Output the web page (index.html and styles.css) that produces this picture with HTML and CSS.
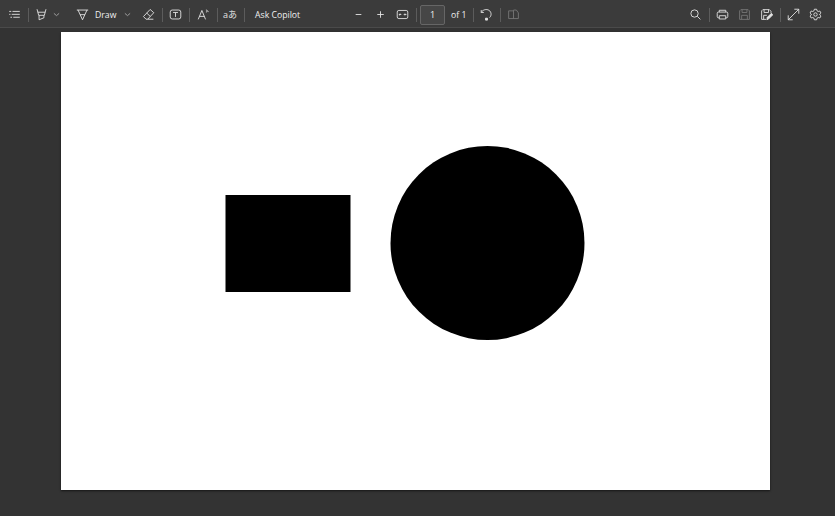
FILE: index.html
```html
<!DOCTYPE html>
<html lang="en">
<head>
    <meta charset="UTF-8">
    <title>PDF viewer</title>
    <link rel="stylesheet" href="styles.css">
</head>
<body>

<div class="toolbar">
    <button class="tool" aria-label="Contents">
        <svg viewBox="0 0 16 16"><path d="M1.500 4.200h2.500M5.500 4.200h9M1.500 7.800h1.500M4.500 7.800h10M3 11.400h2M6.500 11.400h8"/></svg>
    </button>
    <span class="sep"></span>
    <button class="tool" aria-label="Highlight">
        <svg viewBox="0 0 16 16"><path d="M2.500 1.500L4.500 9h7l2-7.500M3.500 5.200h9M5 9v5.500l6-2.500V9"/></svg>
    </button>
    <button class="chev" aria-label="Highlight options">
        <svg viewBox="0 0 8 8"><path d="M1 2.700l3 2.600 3-2.600"/></svg>
    </button>
    <button class="tool tool-draw" aria-label="Draw">
        <svg viewBox="0 0 16 16"><path d="M1 2.500h14M2.500 2.500l5.500 12 5.500-12M5 8.200h6"/></svg>
    </button>
    <span class="label label-draw">Draw</span>
    <button class="chev chev-draw" aria-label="Draw options">
        <svg viewBox="0 0 8 8"><path d="M1 2.700l3 2.600 3-2.600"/></svg>
    </button>
    <button class="tool tool-erase" aria-label="Erase">
        <svg viewBox="0 0 16 16"><path d="M10 1.800l4.500 4-7.500 8H5l-3.200-3.300zM5.800 6.200l4.400 4.200M7 13.800h7"/></svg>
    </button>
    <span class="sep"></span>
    <button class="tool" aria-label="Add text">
        <svg viewBox="0 0 16 16"><rect x="1.500" y="2.500" width="13" height="11" rx="2.500"/><path d="M5 5.500h6M8 5.500v5.500"/></svg>
    </button>
    <span class="sep"></span>
    <button class="tool tool-read" aria-label="Read aloud">
        <svg viewBox="0 0 16 16"><path d="M1.500 14L6 3l4.500 11M3 10.300h6M11 2.500c1.500.2 2.500 1 2.800 2.500M11 5l1.500-.5"/></svg>
    </button>
    <span class="sep"></span>
    <span class="tool translate" aria-label="Translate">aあ</span>
    <span class="sep"></span>
    <span class="label label-copilot">Ask Copilot</span>

    <button class="tool tool-zoom" aria-label="Zoom out">
        <svg viewBox="0 0 16 16"><path d="M4.500 8h7"/></svg>
    </button>
    <button class="tool" aria-label="Zoom in">
        <svg viewBox="0 0 16 16"><path d="M4 8h8M8 4v8"/></svg>
    </button>
    <button class="tool" aria-label="Fit to width">
        <svg viewBox="0 0 16 16"><rect x="1.500" y="3" width="13" height="10" rx="2"/><path d="M3.800 8h2.700M5 6.800L3.800 8 5 9.200M12.200 8H9.500M11 6.800L12.200 8 11 9.200"/></svg>
    </button>
    <span class="sep"></span>
    <input class="page-input" type="text" value="1" aria-label="Page number">
    <span class="label label-of">of 1</span>
    <span class="sep sep-of"></span>
    <button class="tool" aria-label="Rotate">
        <svg viewBox="0 0 16 16"><path d="M1.500 5.500C3.500 2 8 1 11 2.800c3.200 2 3.500 6.500.8 9M1.500 2.500v3h3.200"/><path class="fill" d="M6.800 12.500h2.400v2.400H6.800z"/></svg>
    </button>
    <span class="sep"></span>
    <button class="tool tool-off" aria-label="Page view">
        <svg viewBox="0 0 16 16"><path d="M8 3.500H2v9.500h12V6l-2.500-3.500H8zM8 3.500V13"/></svg>
    </button>

    <button class="tool tool-search" aria-label="Find">
        <svg viewBox="0 0 16 16"><circle cx="6.800" cy="6.800" r="4.500"/><path d="M10.200 10.200L14 14"/></svg>
    </button>
    <span class="sep"></span>
    <button class="tool" aria-label="Print">
        <svg viewBox="0 0 16 16"><path d="M4 5V2.800h8V5M4 12H3a1.500 1.500 0 0 1-1.500-1.500v-4A1.500 1.500 0 0 1 3 5h10a1.500 1.500 0 0 1 1.500 1.500v4A1.500 1.500 0 0 1 13 12h-1M4 9.500h8v4H4z"/></svg>
    </button>
    <button class="tool tool-off" aria-label="Save">
        <svg viewBox="0 0 16 16"><path d="M3.500 2h9l1.500 1.500V14H2V3.500zM5 2v3.500h6V2M4.500 14V9h7v5"/></svg>
    </button>
    <button class="tool" aria-label="Save as">
        <svg viewBox="0 0 16 16"><path d="M7.500 14H2V3.500L3.500 2h8l2 2v2M5 2v3.500h5.500V2M4.500 14V9h4"/><path class="fill" d="M8.500 14.500l.5-3 5-5 1.800 1.800-5 5z"/></svg>
    </button>
    <span class="sep"></span>
    <button class="tool" aria-label="Full screen">
        <svg viewBox="0 0 16 16"><path d="M9 1.500h5.500V7M14.500 1.500l-13 13M1.500 9v5.500H7"/></svg>
    </button>
    <button class="tool" aria-label="Settings">
        <svg viewBox="0 0 16 16"><path d="M6.600 1.500h2.800l.4 1.900 1.600.9 1.900-.6 1.400 2.400-1.400 1.300v1.200l1.400 1.300-1.400 2.400-1.900-.6-1.600.9-.4 1.900H6.600l-.4-1.900-1.600-.9-1.900.6-1.400-2.400 1.400-1.300V7.400L1.300 6.100l1.400-2.400 1.900.6 1.600-.9z"/><circle cx="8" cy="8" r="2.100"/></svg>
    </button>
</div>

<main class="viewer">
    <div class="page">
        <svg class="drawing" viewBox="0 0 709 458">
            <rect x="164.500" y="163" width="125" height="97"/>
            <circle cx="426.500" cy="211" r="97"/>
        </svg>
    </div>
</main>

</body>
</html>
```

FILE: styles.css
```css
html, body {
    height: 100%;
}

body {
    margin: 0;
    background-color: #333333;
    font-family: "Open Sans", "Liberation Sans", sans-serif;
    color: #f0f0f0;
    display: flex;
    flex-direction: column;
    overflow: hidden;
}

.toolbar {
    height: 25px;
    flex: none;
    display: flex;
    align-items: center;
    padding: 2px 9px 0 3px;
    background-color: #3b3b3b;
    border-bottom: 1px solid #4a4a4a;
}

.tool, .chev {
    padding: 0;
    border: none;
    background: none;
    display: flex;
    align-items: center;
    justify-content: center;
    flex: none;
}

.tool {
    width: 22px;
    height: 22px;
}

.chev {
    width: 8px;
    height: 22px;
}

.tool svg {
    width: 13px;
    height: 13px;
}

.chev svg {
    width: 7px;
    height: 7px;
}

svg path, svg rect, svg circle {
    fill: none;
    stroke: #e4e4e4;
    stroke-width: 1.100;
}

.chev svg path {
    stroke: #a0a0a0;
}

.toolbar svg path.fill {
    fill: #e4e4e4;
}

.tool-off svg path {
    stroke: #777777;
}

.sep {
    width: 1px;
    height: 14px;
    margin: 0 1px 0 3px;
    background-color: #5c5c5c;
    flex: none;
}

.label {
    font-size: 8.700px;
    font-weight: 500;
    white-space: nowrap;
    flex: none;
}

.translate {
    font-family: "Open Sans", "Noto Sans CJK JP", sans-serif;
    font-size: 9px;
    color: #e4e4e4;
}

.tool-draw {
    margin-left: 11px;
}

.label-draw {
    margin-left: 2px;
    width: 20px;
}

.chev-draw {
    margin-left: 8px;
}

.tool-erase {
    margin-left: 6px;
}

.tool-read {
    margin-left: 1px;
}

.label-copilot {
    margin-left: 9px;
    width: 44px;
}

.tool-zoom {
    margin-left: 48px;
}

.page-input {
    width: 25px;
    height: 20px;
    margin-left: 2px;
    padding: 0;
    box-sizing: border-box;
    border: 1px solid #666666;
    border-radius: 2px;
    background-color: #464646;
    color: #f0f0f0;
    font-family: inherit;
    font-size: 9px;
    text-align: center;
}

.label-of {
    margin-left: 6px;
    width: 14px;
}

.sep-of {
    margin-left: 8px;
}

.tool-search {
    margin-left: auto;
}

.viewer {
    flex: 1;
    display: flex;
    justify-content: center;
    align-items: flex-start;
    padding: 4px 4px 0 0;
}

.page {
    width: 709px;
    height: 458px;
    background-color: #ffffff;
    box-shadow: 0 1px 2px rgba(0, 0, 0, 0.6);
}

.drawing {
    display: block;
    width: 100%;
    height: 100%;
}

.drawing rect, .drawing circle {
    fill: #000000;
    stroke: none;
}
```
